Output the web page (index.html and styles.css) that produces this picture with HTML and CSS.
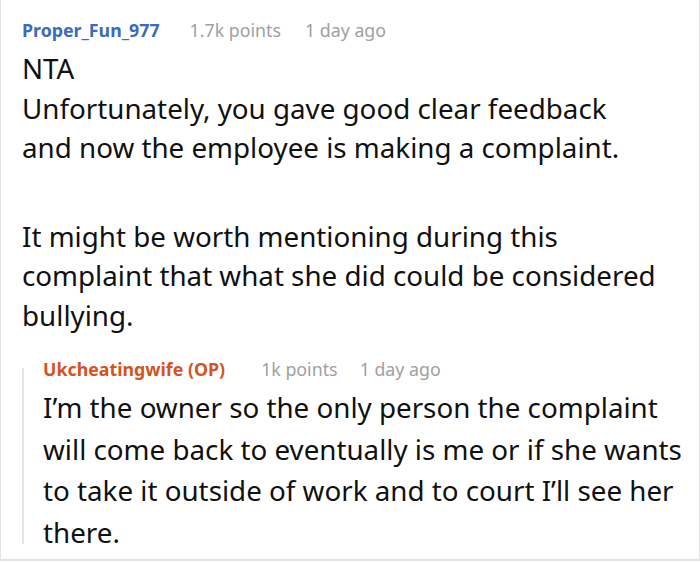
FILE: index.html
```html
<!DOCTYPE html>
<html>
<head>
<meta charset="utf-8">
<link rel="stylesheet" href="styles.css">
</head>
<body>
<div class="thread">
  <div class="comment">
    <div class="meta">
      <span class="author">Proper_Fun_977</span>
      <span class="points">1.7k points</span>
      <span class="time">1 day ago</span>
    </div>
    <p class="text">NTA<br>Unfortunately, you gave good clear feedback<br>and now the employee is making a complaint.</p>
    <p class="text">It might be worth mentioning during this<br>complaint that what she did could be considered<br>bullying.</p>
  </div>
  <div class="reply">
    <div class="meta">
      <span class="author op">Ukcheatingwife (OP)</span>
      <span class="points">1k points</span>
      <span class="time">1 day ago</span>
    </div>
    <p class="text">I’m the owner so the only person the complaint<br>will come back to eventually is me or if she wants<br>to take it outside of work and to court I’ll see her<br>there.</p>
  </div>
</div>
</body>
</html>
```

FILE: styles.css
```css
html, body {
  margin: 0;
  padding: 0;
  background: #ffffff;
}

body {
  font-family: "Noto Sans", "Open Sans", sans-serif;
  color: #111111;
}

.thread {
  box-sizing: border-box;
  width: 700px;
  height: 561px;
  border-left: 1px solid #e3e3e3;
  border-right: 1px solid #e3e3e3;
  border-bottom: 2px solid #e3e3e3;
  padding: 18px 0 0 21px;
}

.meta {
  display: flex;
  align-items: baseline;
  font-size: 17.8px;
  line-height: 24px;
  margin-bottom: 6px;
  color: #a0a0a0;
}

.comment .meta {
  margin-bottom: 7px;
}

.author {
  font-weight: 700;
  color: #3a6bbf;
}

.author.op {
  color: #d5531f;
}

.points {
  margin-left: 30px;
}

.time {
  margin-left: 24px;
}

.reply .points {
  margin-left: 36px;
}

.reply .time {
  margin-left: 22px;
}

.text {
  margin: 0;
  font-size: 27.75px;
  line-height: 39.5px;
}

.text + .text {
  margin-top: 49px;
}

.reply {
  position: relative;
  margin-top: 22px;
  padding-left: 21px;
}

.reply .text {
  line-height: 41.5px;
}

.reply::before {
  content: "";
  position: absolute;
  left: 0;
  top: 11px;
  bottom: 9px;
  width: 2px;
  background: #e6e6e6;
}
```
